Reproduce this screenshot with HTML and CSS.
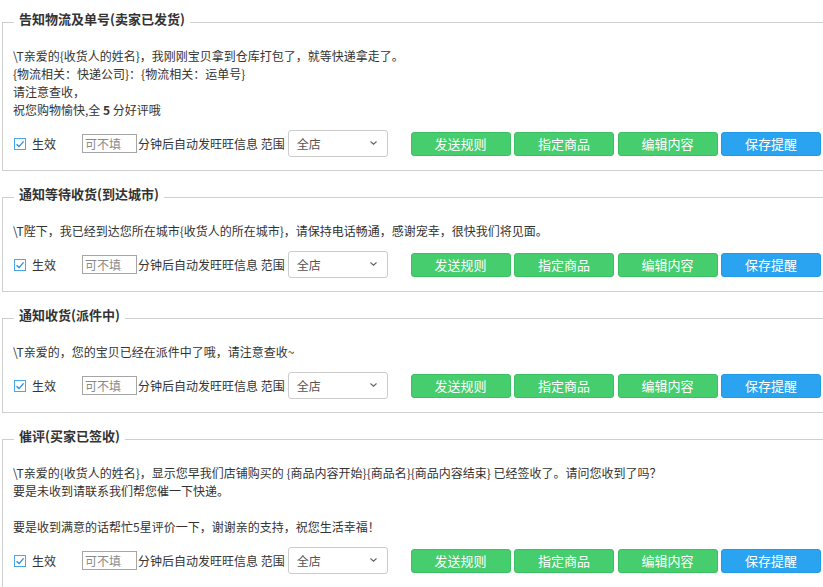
FILE: index.html
```html
<!DOCTYPE html>
<html lang="zh-CN">
<head>
<meta charset="utf-8">
<title>旺旺提醒设置</title>
<link rel="stylesheet" href="styles.css">
</head>
<body>
<div class="page">

<fieldset class="panel">
  <legend class="panel-title">告知物流及单号(卖家已发货)</legend>
  <div class="message">
    <p>\T亲爱的{收货人的姓名}，我刚刚宝贝拿到仓库打包了，就等快递拿走了。</p>
    <p>{物流相关：快递公司}：{物流相关：运单号}</p>
    <p>请注意查收，</p>
    <p>祝您购物愉快,全 <b>5</b> 分好评哦</p>
  </div>
  <div class="controls">
    <label class="enable"><span class="check"><svg width="12" height="12" viewBox="0 0 12 12"><rect x="0.5" y="0.5" width="11" height="11" fill="#fff" stroke="#4aa6ea"/><path d="M2.6 6.2 L5 8.6 L9.6 3.4" fill="none" stroke="#2b8fe0" stroke-width="1.4"/></svg></span>生效</label>
    <input class="delay" type="text" placeholder="可不填">
    <span class="hint">分钟后自动发旺旺信息 范围</span>
    <div class="scope"><span>全店</span><svg class="caret" width="7" height="4" viewBox="0 0 7 4"><path d="M0.5 0.5 L3.5 3.2 L6.5 0.5" fill="none" stroke="#666" stroke-width="1.1"/></svg></div>
    <div class="actions">
      <button class="btn btn-green">发送规则</button>
      <button class="btn btn-green">指定商品</button>
      <button class="btn btn-green">编辑内容</button>
      <button class="btn btn-blue">保存提醒</button>
    </div>
  </div>
</fieldset>

<fieldset class="panel">
  <legend class="panel-title">通知等待收货(到达城市)</legend>
  <div class="message">
    <p>\T陛下，我已经到达您所在城市{收货人的所在城市}，请保持电话畅通，感谢宠幸，很快我们将见面。</p>
  </div>
  <div class="controls">
    <label class="enable"><span class="check"><svg width="12" height="12" viewBox="0 0 12 12"><rect x="0.5" y="0.5" width="11" height="11" fill="#fff" stroke="#4aa6ea"/><path d="M2.6 6.2 L5 8.6 L9.6 3.4" fill="none" stroke="#2b8fe0" stroke-width="1.4"/></svg></span>生效</label>
    <input class="delay" type="text" placeholder="可不填">
    <span class="hint">分钟后自动发旺旺信息 范围</span>
    <div class="scope"><span>全店</span><svg class="caret" width="7" height="4" viewBox="0 0 7 4"><path d="M0.5 0.5 L3.5 3.2 L6.5 0.5" fill="none" stroke="#666" stroke-width="1.1"/></svg></div>
    <div class="actions">
      <button class="btn btn-green">发送规则</button>
      <button class="btn btn-green">指定商品</button>
      <button class="btn btn-green">编辑内容</button>
      <button class="btn btn-blue">保存提醒</button>
    </div>
  </div>
</fieldset>

<fieldset class="panel">
  <legend class="panel-title">通知收货(派件中)</legend>
  <div class="message">
    <p>\T亲爱的，您的宝贝已经在派件中了哦，请注意查收~</p>
  </div>
  <div class="controls">
    <label class="enable"><span class="check"><svg width="12" height="12" viewBox="0 0 12 12"><rect x="0.5" y="0.5" width="11" height="11" fill="#fff" stroke="#4aa6ea"/><path d="M2.6 6.2 L5 8.6 L9.6 3.4" fill="none" stroke="#2b8fe0" stroke-width="1.4"/></svg></span>生效</label>
    <input class="delay" type="text" placeholder="可不填">
    <span class="hint">分钟后自动发旺旺信息 范围</span>
    <div class="scope"><span>全店</span><svg class="caret" width="7" height="4" viewBox="0 0 7 4"><path d="M0.5 0.5 L3.5 3.2 L6.5 0.5" fill="none" stroke="#666" stroke-width="1.1"/></svg></div>
    <div class="actions">
      <button class="btn btn-green">发送规则</button>
      <button class="btn btn-green">指定商品</button>
      <button class="btn btn-green">编辑内容</button>
      <button class="btn btn-blue">保存提醒</button>
    </div>
  </div>
</fieldset>

<fieldset class="panel">
  <legend class="panel-title">催评(买家已签收)</legend>
  <div class="message">
    <p>\T亲爱的{收货人的姓名}，显示您早我们店铺购买的 {商品内容开始}{商品名}{商品内容结束} 已经签收了。请问您收到了吗？</p>
    <p>要是未收到请联系我们帮您催一下快递。</p>
    <p class="blank"></p>
    <p>要是收到满意的话帮忙5星评价一下，谢谢亲的支持，祝您生活幸福！</p>
  </div>
  <div class="controls">
    <label class="enable"><span class="check"><svg width="12" height="12" viewBox="0 0 12 12"><rect x="0.5" y="0.5" width="11" height="11" fill="#fff" stroke="#4aa6ea"/><path d="M2.6 6.2 L5 8.6 L9.6 3.4" fill="none" stroke="#2b8fe0" stroke-width="1.4"/></svg></span>生效</label>
    <input class="delay" type="text" placeholder="可不填">
    <span class="hint">分钟后自动发旺旺信息 范围</span>
    <div class="scope"><span>全店</span><svg class="caret" width="7" height="4" viewBox="0 0 7 4"><path d="M0.5 0.5 L3.5 3.2 L6.5 0.5" fill="none" stroke="#666" stroke-width="1.1"/></svg></div>
    <div class="actions">
      <button class="btn btn-green">发送规则</button>
      <button class="btn btn-green">指定商品</button>
      <button class="btn btn-green">编辑内容</button>
      <button class="btn btn-blue">保存提醒</button>
    </div>
  </div>
</fieldset>

</div>
</body>
</html>
```

FILE: styles.css
```css
html, body {
  margin: 0;
  padding: 0;
  overflow: hidden;
  background: #fff;
}

body {
  font-family: "Noto Sans CJK SC", "Noto Sans", "Liberation Sans", sans-serif;
  font-size: 12px;
  color: #333;
}

.page {
  width: 823px;
}

.panel {
  margin: 11px -1px 15px 2px;
  padding: 13px 2px 13px 10px;
  border: 1px solid #cfcfcf;
  min-inline-size: 0;
}

.panel + .panel {
  margin-top: 0;
}

.panel-title {
  margin-left: 1px;
  padding: 0 5px 7px;
  font-size: 13px;
  line-height: 16px;
  font-weight: bold;
  color: #333;
}

.message p {
  margin: 0;
  line-height: 18px;
  white-space: nowrap;
}

.message p.blank {
  height: 18px;
}

.message b {
  font-weight: bold;
}

.controls {
  display: flex;
  align-items: center;
  height: 27px;
  margin-top: 11px;
}

.enable {
  display: flex;
  align-items: center;
  margin-left: 1px;
  line-height: 18px;
}

.check {
  display: flex;
  width: 12px;
  height: 12px;
  margin-right: 6px;
}

.delay {
  box-sizing: border-box;
  width: 55px;
  height: 19px;
  margin: 0 0 0 26px;
  padding: 0 2px;
  border: 1px solid #a5a5a5;
  border-radius: 0;
  font-family: inherit;
  font-size: 12px;
  color: #333;
  outline: none;
}

.delay::placeholder {
  color: #8a8a8a;
}

.hint {
  white-space: nowrap;
  margin-left: 1px;
}

.scope {
  box-sizing: border-box;
  display: flex;
  align-items: center;
  width: 100px;
  height: 27px;
  margin-left: 3px;
  padding: 0 10px 0 8px;
  border: 1px solid #cccccc;
  border-radius: 3px;
  color: #555;
  font-size: 12px;
}

.scope .caret {
  margin-left: auto;
  margin-top: -2px;
}

.actions {
  display: flex;
  gap: 3.5px;
  margin-left: auto;
}

.btn {
  box-sizing: border-box;
  width: 100px;
  height: 24px;
  padding: 0;
  border: 1px solid;
  border-radius: 3px;
  font-family: inherit;
  font-size: 13px;
  line-height: 22px;
  color: #fff;
  cursor: pointer;
}

.btn-green {
  background: #45cd6e;
  border-color: #3dbf64;
}

.btn-blue {
  background: #2aa4f0;
  border-color: #239ae6;
}
```
